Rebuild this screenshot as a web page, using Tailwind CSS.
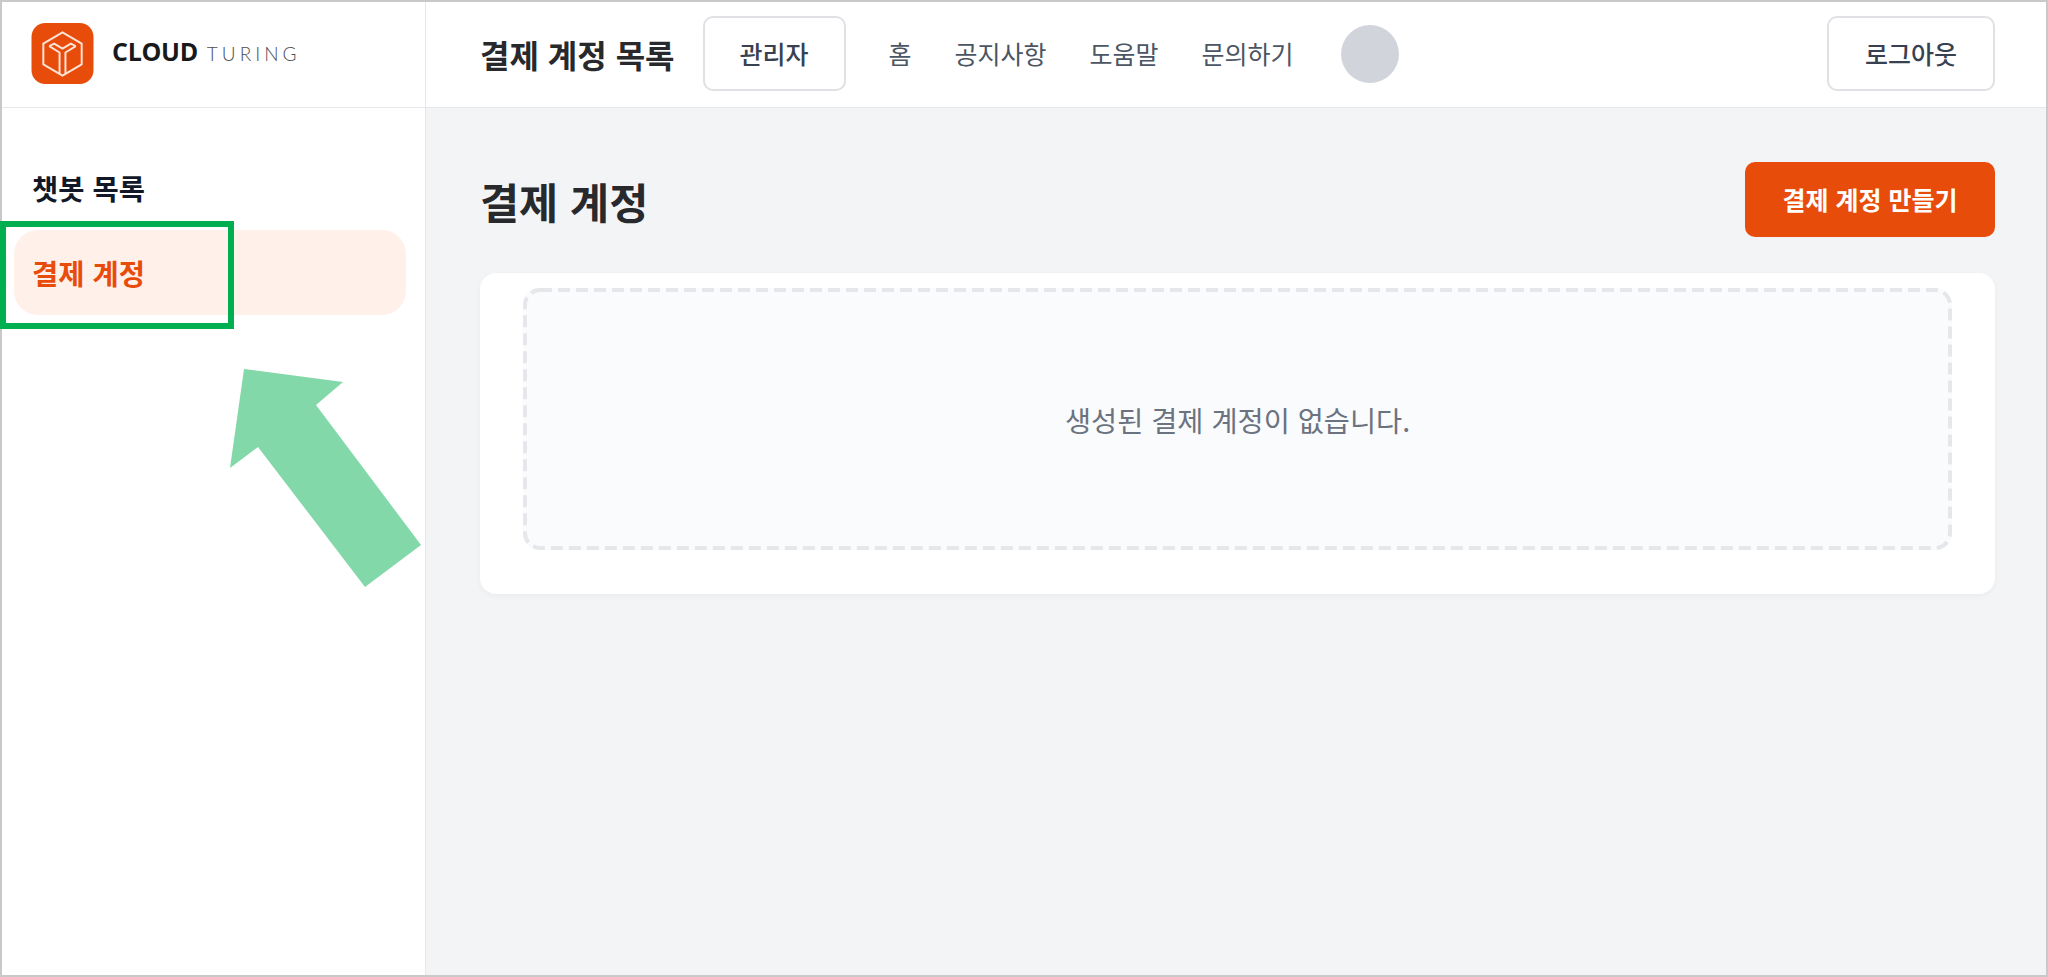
<!DOCTYPE html>
<html lang="ko">
<head>
  <meta charset="UTF-8" />
  <title>결제 계정 목록</title>
  <script src="https://cdn.jsdelivr.net/npm/@tailwindcss/browser@4"></script>
</head>
<body class="font-['Noto_Sans_CJK_KR','Noto_Sans',sans-serif]">
  <div class="relative h-[977px] w-[2048px] border-2 border-[#c9c9c9] bg-white">

    <!-- Header -->
    <header class="flex h-[106px] border-b border-[#e5e7eb] pb-[2px]">
      <div class="-mb-[2px] flex w-[424px] shrink-0 items-center border-r border-[#e5e7eb] pb-[2px] pl-[29px]">
        <svg class="h-[61px] w-[63px]" viewBox="0 0 63 62">
          <rect width="63" height="62" rx="14" fill="#e84c0b" />
          <g fill="none" stroke="#fde3d6" stroke-width="2" stroke-linejoin="round">
            <path d="M31.5 9.5 L51 21 V42 L31.5 53.5 L12 42 V21 Z" />
            <path d="M18 23.5 L28.5 30 V51 M45 23.5 L34.5 30 V51" />
            <path d="M18 23.5 L23 21 L31.5 26 L40 21 L45 23.5" />
          </g>
        </svg>
        <div class="mb-[4px] ml-[18px] flex items-baseline">
          <span class="font-['Open_Sans',sans-serif] text-[25px] font-bold leading-none tracking-[-0.3px] text-[#17191c]">CLOUD</span>
          <span class="ml-[9px] font-['Lato',sans-serif] text-[19px] font-light leading-none tracking-[4px] text-[#4b4f54]">TURING</span>
        </div>
      </div>
      <div class="flex min-w-0 flex-1 items-center pl-[54px] pr-[51px]">
        <h1 class="text-[32px] font-bold leading-none text-[#27292d]">결제 계정 목록</h1>
        <button class="ml-[28px] h-[75px] w-[143px] rounded-[10px] border-2 border-[#dfe1e5] text-[25px] font-medium text-[#374151]">관리자</button>
        <nav class="ml-[43px] flex items-center gap-[43px] text-[25px] text-[#4b5563]">
          <a>홈</a>
          <a>공지사항</a>
          <a>도움말</a>
          <a>문의하기</a>
        </nav>
        <div class="ml-[47px] h-[58px] w-[58px] rounded-full bg-[#d1d5db]"></div>
        <button class="ml-auto h-[75px] w-[168px] rounded-[10px] border-2 border-[#dfe1e5] text-[25px] font-medium text-[#374151]">로그아웃</button>
      </div>
    </header>

    <div class="flex h-[867px]">
      <!-- Sidebar -->
      <aside class="w-[424px] shrink-0 border-r border-[#e5e7eb] px-[12px] pt-[55px]">
        <div class="pl-[18px] text-[28.5px] font-bold leading-[50px] text-[#111827]">챗봇 목록</div>
        <div class="mt-[17px] flex h-[85px] w-[392px] items-center rounded-[24px] bg-[#fff0ea] pl-[18px] pt-[2px] text-[28.5px] font-bold text-[#e84c0b]">결제 계정</div>
      </aside>

      <!-- Main -->
      <main class="flex-1 bg-[#f3f4f6] pl-[54px] pr-[51px] pt-[54px]">
        <div class="flex h-[75px] items-center justify-between">
          <h2 class="pt-[4px] text-[42.5px] font-bold leading-none text-[#27292d]">결제 계정</h2>
          <button class="h-[75px] w-[250px] rounded-[10px] bg-[#e84c0b] text-[25px] font-bold text-white">결제 계정 만들기</button>
        </div>
        <section class="mt-[36px] h-[321px] rounded-[16px] bg-white px-[43px] pt-[15px] shadow-[0_2px_6px_rgba(0,0,0,0.04)]">
          <div class="relative flex h-[262px] items-center justify-center rounded-[16px] bg-[#fafbfc] pt-[2px] text-[28.4px] text-[#6b7280]">
            <svg class="absolute inset-0" width="1429" height="262" fill="none">
              <rect x="2" y="2" width="1425" height="258" rx="15" stroke="#e5e7eb" stroke-width="4" stroke-dasharray="12 6" />
            </svg>
            <span class="relative">생성된 결제 계정이 없습니다.</span>
          </div>
        </section>
      </main>
    </div>

    <!-- Annotation: green box and arrow -->
    <div class="absolute left-[-2px] top-[219px] h-[108px] w-[234px] border-[6px] border-[#00b050]"></div>
    <svg class="absolute left-[-2px] top-[-2px]" width="440" height="620" viewBox="0 0 440 620">
      <polygon points="244,369 343,382 316,405 421,545 365,587 258,447 230,468" fill="#82d8a8" />
    </svg>
  </div>
</body>
</html>
